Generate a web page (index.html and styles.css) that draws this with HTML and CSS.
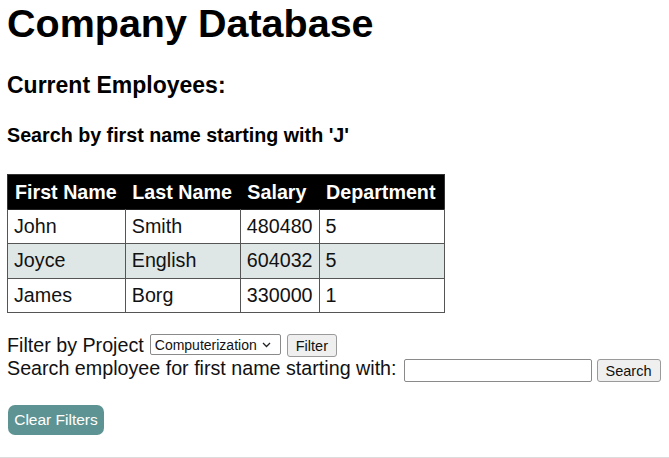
FILE: index.html
```html
<!DOCTYPE html>
<html lang="en">
<head>
<meta charset="utf-8">
<title>Company Database</title>
<link rel="stylesheet" href="styles.css">
</head>
<body>
<div class="page">
  <h1 class="title">Company Database</h1>
  <h2 class="subtitle">Current Employees:</h2>
  <h4 class="caption">Search by first name starting with 'J'</h4>
  <table class="emp">
    <thead>
      <tr><th>First Name</th><th>Last Name</th><th>Salary</th><th>Department</th></tr>
    </thead>
    <tbody>
      <tr><td>John</td><td>Smith</td><td>480480</td><td>5</td></tr>
      <tr class="alt"><td>Joyce</td><td>English</td><td>604032</td><td>5</td></tr>
      <tr><td>James</td><td>Borg</td><td>330000</td><td>1</td></tr>
    </tbody>
  </table>
  <form class="filters">
    <div class="line">
      <span>Filter by Project</span>
      <span class="select-wrap">
        <select class="select"><option>Computerization</option></select>
        <svg class="chev" width="9" height="6" viewBox="0 0 9 6"><path d="M1 1 L4.5 4.5 L8 1" fill="none" stroke="#222" stroke-width="1.3"/></svg>
      </span>
      <button type="button" class="btn">Filter</button>
    </div>
    <div class="line line-search">
      <span>Search employee for first name starting with:</span>
      <input class="text" type="text">
      <button type="button" class="btn btn-search">Search</button>
    </div>
  </form>
  <button type="button" class="clear">Clear Filters</button>
</div>
<div class="footer"></div>
</body>
</html>
```

FILE: styles.css
```css
html, body {
  margin: 0;
  padding: 0;
  background: #fff;
}
body {
  font-family: "Liberation Sans", Arial, sans-serif;
  color: #111;
  font-size: 19.7px;
}
.page {
  padding: 0 7px;
}
.title {
  font-size: 39.5px;
  line-height: 45px;
  margin: 1px 0 0;
  font-weight: bold;
  color: #000;
}
.subtitle {
  font-size: 23px;
  line-height: 26px;
  margin: 26px 0 0;
  color: #000;
}
.caption {
  font-size: 19.7px;
  line-height: 23px;
  margin: 26px 0 0;
  color: #000;
}
.emp {
  margin-top: 27px;
  border-collapse: collapse;
  border: 1px solid #333;
}
.emp th {
  background: #000;
  color: #fff;
  font-weight: bold;
  text-align: left;
  padding: 0 8.5px 0 7px;
  line-height: 34px;
  border: 0;
}
.emp td {
  padding: 0 6px;
  line-height: 33.4px;
  border: 1px solid #555;
  border-top-color: #222;
}
.emp tr.alt td {
  background: #dfe6e6;
}
.filters {
  margin-top: 21px;
}
.line {
  line-height: 23px;
  height: 23px;
  display: flex;
  align-items: center;
}
.line > span:first-child {
  margin-right: 6px;
}
.line-search .text,
.line-search .btn {
  margin-top: 4px;
}
.select-wrap {
  position: relative;
  display: inline-block;
  height: 21px;
  align-self: flex-start;
}
.select {
  appearance: none;
  -webkit-appearance: none;
  font-family: "Liberation Sans", Arial, sans-serif;
  font-size: 14px;
  width: 131px;
  height: 21px;
  padding: 0 0 0 4px;
  border: 1px solid #8a8a8a;
  border-radius: 2px;
  background: #fff;
  color: #111;
  display: block;
}
.chev {
  position: absolute;
  right: 10px;
  top: 8px;
}
.btn {
  font-family: "Liberation Sans", Arial, sans-serif;
  font-size: 14.5px;
  height: 23px;
  padding: 0 8px;
  margin-left: 6px;
  background: #efefef;
  border: 1px solid #9a9a9a;
  border-radius: 3px;
  color: #111;
}
.btn-search {
  margin-left: 5px;
  width: 64px;
}
.text {
  width: 188px;
  height: 23px;
  box-sizing: border-box;
  border: 1px solid #8a8a8a;
  border-radius: 2px;
  padding: 0 4px;
  margin-left: 1px;
}
.clear {
  margin: 25px 0 0 1px;
  width: 96px;
  height: 30px;
  background: #5e9393;
  color: #fff;
  border: 0;
  border-radius: 7px;
  font-family: "Liberation Sans", Arial, sans-serif;
  font-size: 15.5px;
  padding: 0;
}
.footer {
  margin-top: 22px;
  border-top: 1px solid #dcdcdc;
}
```
